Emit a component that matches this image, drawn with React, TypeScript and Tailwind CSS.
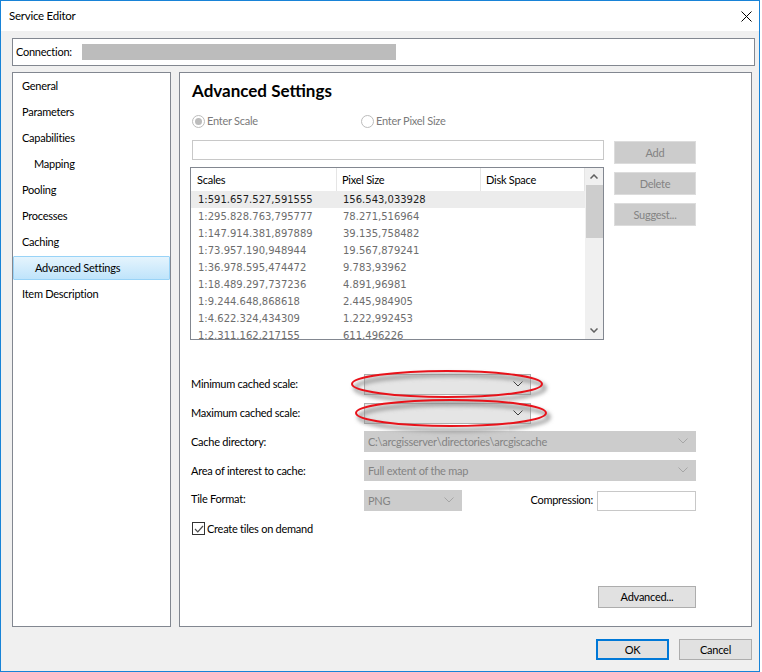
import React from 'react';

const navItems = [
  { label: 'General', indent: false },
  { label: 'Parameters', indent: false },
  { label: 'Capabilities', indent: false },
  { label: 'Mapping', indent: true },
  { label: 'Pooling', indent: false },
  { label: 'Processes', indent: false },
  { label: 'Caching', indent: false },
  { label: 'Advanced Settings', indent: true, selected: true },
  { label: 'Item Description', indent: false },
];

const scales = [
  ['1:591.657.527,591555', '156.543,033928'],
  ['1:295.828.763,795777', '78.271,516964'],
  ['1:147.914.381,897889', '39.135,758482'],
  ['1:73.957.190,948944', '19.567,879241'],
  ['1:36.978.595,474472', '9.783,93962'],
  ['1:18.489.297,737236', '4.891,96981'],
  ['1:9.244.648,868618', '2.445,984905'],
  ['1:4.622.324,434309', '1.222,992453'],
  ['1:2.311.162,217155', '611,496226'],
];

function Chevron({ color }: { color: string }) {
  return (
    <svg width="10" height="6" viewBox="0 0 10 6" className="shrink-0">
      <path d="M0.5 0.5 L5 5 L9.5 0.5" fill="none" stroke={color} strokeWidth="1" />
    </svg>
  );
}

function Combo({ width, text, enabled }: { width: string; text?: string; enabled?: boolean }) {
  return (
    <div
      className={`${width} h-[21px] flex items-center justify-between pl-[3px] pr-[7px] pb-px border ${
        enabled ? 'bg-[#e5e5e5] border-[#adadad]' : 'bg-[#cccccc] border-[#cccccc] text-[#838383]'
      }`}
    >
      <span>{text}</span>
      <Chevron color={enabled ? '#3c3c3c' : '#a6a6a6'} />
    </div>
  );
}

function DisabledButton({ label }: { label: string }) {
  return (
    <div className="w-[82px] h-[23px] flex items-center justify-center pb-px bg-[#cccccc] border border-[#dcdcdc] text-[#838383]">
      {label}
    </div>
  );
}

export default function App() {
  return (
    <div className="w-[762px] h-[672px] bg-white text-[11px] tracking-[-0.25px] text-black font-['Lato',sans-serif] leading-none">
      <div className="w-[760px] h-[672px] border border-[#1883d7] bg-[#f0f0f0] flex flex-col">
        {/* Title bar */}
        <div className="h-[30px] shrink-0 bg-white flex items-center justify-between pl-[8px] pr-[7px]">
          <span className="text-[11.5px]">Service Editor</span>
          <svg width="11" height="11" viewBox="0 0 11 11">
            <path d="M0.5 0.5 L10.5 10.5 M10.5 0.5 L0.5 10.5" stroke="#000" strokeWidth="1" />
          </svg>
        </div>

        {/* Connection */}
        <div className="mt-[7px] ml-[11px] mr-[4px] h-[28px] shrink-0 border border-[#828790] bg-white flex items-center pl-[3px]">
          <span className="w-[66px] pb-[2px]">Connection:</span>
          <div className="w-[314px] h-[16px] bg-[#bcbcbc]" />
        </div>

        {/* Main */}
        <div className="mt-[6px] ml-[11px] h-[555px] shrink-0 flex gap-[8px]">
          <div className="w-[159px] h-full border border-[#828790] bg-white flex flex-col">
            {navItems.map((item) => (
              <div key={item.label} className="h-[26px] flex items-center">
                {item.selected ? (
                  <div className="w-full h-[24px] flex items-center pl-[21px] pb-[2px] border border-[#99d3f7] rounded-[1px] bg-gradient-to-b from-[#e5f4fd] to-[#bfe4fb]">
                    {item.label}
                  </div>
                ) : (
                  <span className={`pb-[2px] ${item.indent ? 'pl-[21px]' : 'pl-[9px]'}`}>{item.label}</span>
                )}
              </div>
            ))}
          </div>

          <div className="relative w-[573px] h-full border border-[#828790] bg-white pl-[10px] flex flex-col">
            <div className="mt-[7px] pl-[2px] h-[20px] flex items-center text-[17px] tracking-normal font-bold">Advanced Settings</div>

            {/* Radios */}
            <div className="mt-[13px] h-[16px] flex items-center pl-[2px] text-[#7a7a7a]">
              <div className="w-[169px] flex items-center">
                <div className="w-[13px] h-[13px] rounded-full border border-[#bcbcbc] flex items-center justify-center">
                  <div className="w-[7px] h-[7px] rounded-full bg-[#bcbcbc]" />
                </div>
                <span className="ml-[2px] pb-[2px]">Enter Scale</span>
              </div>
              <div className="w-[13px] h-[13px] rounded-full border border-[#bcbcbc]" />
              <span className="ml-[2px] pb-[2px]">Enter Pixel Size</span>
            </div>

            {/* Scales + buttons */}
            <div className="mt-[11px] flex items-start">
              <div className="flex flex-col">
                <div className="ml-[2px] w-[412px] h-[20px] border border-[#c8c8c8] bg-white" />
                <div className="mt-[7px] w-[414px] h-[173px] border border-[#828790] flex overflow-hidden">
                  <div className="w-[394px] flex flex-col">
                    <div className="h-[23px] shrink-0 flex items-center">
                      <div className="w-[146px] h-full flex items-center pl-[6px] border-r border-[#e5e5e5]">Scales</div>
                      <div className="w-[144px] h-full flex items-center pl-[5px] border-r border-[#e5e5e5]">Pixel Size</div>
                      <div className="flex-1 h-full flex items-center pl-[5px] border-r border-[#e5e5e5]">Disk Space</div>
                    </div>
                    {scales.map(([s, p], i) => (
                      <div
                        key={s}
                        className={`h-[17px] shrink-0 flex items-center pt-px tracking-normal font-['DejaVu_Sans',sans-serif] text-[10px] ${
                          i === 0 ? 'bg-[#ececec] text-[#1e1e1e]' : 'text-[#6d6d6d]'
                        }`}
                      >
                        <span className="w-[146px] pl-[7px]">{s}</span>
                        <span className="pl-[6px]">{p}</span>
                      </div>
                    ))}
                  </div>
                  <div className="w-[18px] h-full bg-[#f0f0f0] flex flex-col items-center">
                    <div className="h-[17px] flex items-center justify-center">
                      <svg width="8" height="5" viewBox="0 0 8 5">
                        <path d="M0.5 4.5 L4 1 L7.5 4.5" fill="none" stroke="#606060" strokeWidth="1.5" />
                      </svg>
                    </div>
                    <div className="w-[17px] h-[53px] bg-[#cdcdcd]" />
                    <div className="flex-1" />
                    <div className="h-[17px] flex items-center justify-center">
                      <svg width="8" height="5" viewBox="0 0 8 5">
                        <path d="M0.5 0.5 L4 4 L7.5 0.5" fill="none" stroke="#606060" strokeWidth="1.5" />
                      </svg>
                    </div>
                  </div>
                </div>
              </div>
              <div className="ml-[10px] mt-[1px] flex flex-col gap-[8px]">
                <DisabledButton label="Add" />
                <DisabledButton label="Delete" />
                <DisabledButton label="Suggest..." />
              </div>
            </div>

            {/* Form */}
            <div className="w-[506px] flex flex-col">
              <div className="mt-[34px] h-[21px] flex items-center">
                <span className="w-[174px] pl-[1px] -mt-[2px]">Minimum cached scale:</span>
                <Combo width="w-[167px]" enabled />
              </div>
              <div className="mt-[8px] h-[21px] flex items-center">
                <span className="w-[174px] pl-[1px] -mt-[2px]">Maximum cached scale:</span>
                <Combo width="w-[167px]" enabled />
              </div>
              <div className="mt-[7px] h-[21px] flex items-center">
                <span className="w-[174px] pl-[1px]">Cache directory:</span>
                <Combo width="w-[332px]" text="C:\arcgisserver\directories\arcgiscache" />
              </div>
              <div className="mt-[8px] h-[21px] flex items-center">
                <span className="w-[174px] pl-[1px]">Area of interest to cache:</span>
                <Combo width="w-[332px]" text="Full extent of the map" />
              </div>
              <div className="mt-[9px] h-[21px] flex items-center">
                <span className="w-[174px] pl-[1px] -mt-[5px]">Tile Format:</span>
                <Combo width="w-[98px]" text="PNG" />
                <span className="ml-auto -mt-[3px]">Compression:</span>
                <div className="ml-[4px] w-[99px] h-[20px] border border-[#c8c8c8] bg-white" />
              </div>
              <div className="mt-[11px] h-[13px] flex items-center pl-[2px]">
                <div className="w-[13px] h-[13px] border border-[#333333] bg-white flex items-center justify-center">
                  <svg width="10" height="8" viewBox="0 0 10 8">
                    <path d="M1 4 L3.8 6.8 L9 1" fill="none" stroke="#4d4d4d" strokeWidth="1.2" />
                  </svg>
                </div>
                <span className="ml-[2px] pb-px">Create tiles on demand</span>
              </div>
              <div className="mt-[51px] flex justify-end">
                <div className="w-[98px] h-[22px] flex items-center justify-center pb-px bg-[#e1e1e1] border border-[#adadad]">
                  Advanced...
                </div>
              </div>
            </div>

            {/* Red ellipse annotations */}
            <svg className="absolute left-0 top-0 pointer-events-none" width="571" height="553">
              <defs>
                <filter id="sh" x="-20%" y="-50%" width="140%" height="200%">
                  <feGaussianBlur stdDeviation="2" />
                </filter>
              </defs>
              <ellipse cx="270" cy="315" rx="95" ry="13" fill="none" stroke="#8a8a8a" strokeWidth="3" filter="url(#sh)" />
              <ellipse cx="274" cy="344" rx="95" ry="13" fill="none" stroke="#8a8a8a" strokeWidth="3" filter="url(#sh)" />
              <ellipse cx="267" cy="311" rx="95" ry="13" fill="none" stroke="#e8121a" strokeWidth="2" />
              <ellipse cx="271" cy="340" rx="95" ry="13" fill="none" stroke="#e8121a" strokeWidth="2" />
            </svg>
          </div>
        </div>

        {/* Bottom buttons */}
        <div className="mt-[12px] mr-[7px] flex justify-end gap-[10px]">
          <div className="w-[73px] h-[21px] flex items-center justify-center pb-px bg-[#e1e1e1] border-2 border-[#0078d7]">OK</div>
          <div className="w-[73px] h-[21px] flex items-center justify-center pb-px bg-[#e1e1e1] border border-[#adadad]">Cancel</div>
        </div>
      </div>
    </div>
  );
}
